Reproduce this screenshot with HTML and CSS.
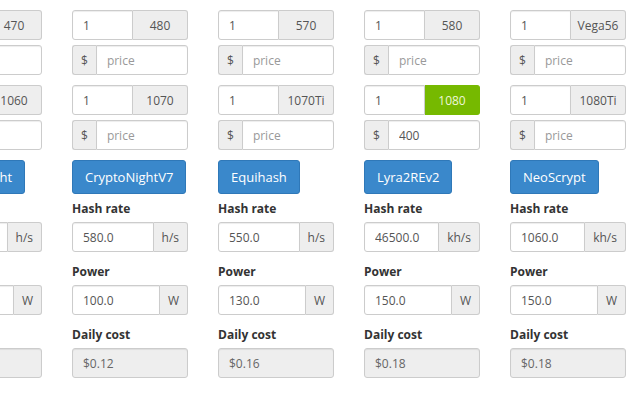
FILE: index.html
```html
<!DOCTYPE html>
<html>
<head>
<meta charset="utf-8">
<link rel="stylesheet" href="styles.css">
</head>
<body>
<div class="row">
  <div class="col">
    <div class="group"><input class="ctl" value="1"><span class="addon gpu">470</span></div>
    <div class="group pair"><span class="addon">$</span><input class="ctl" placeholder="price"></div>
    <div class="group"><input class="ctl" value="1"><span class="addon gpu">1060</span></div>
    <div class="group pair"><span class="addon">$</span><input class="ctl" placeholder="price"></div>
    <button class="btn">CryptoNight</button>
    <label class="lbl">Hash rate</label>
    <div class="group"><input class="ctl" value="750.0"><span class="addon">h/s</span></div>
    <label class="lbl">Power</label>
    <div class="group"><input class="ctl" value="120.0"><span class="addon">W</span></div>
    <label class="lbl">Daily cost</label>
    <input class="ctl full" value="$0.14" disabled>
  </div>
  <div class="col">
    <div class="group"><input class="ctl" value="1"><span class="addon gpu">480</span></div>
    <div class="group pair"><span class="addon">$</span><input class="ctl" placeholder="price"></div>
    <div class="group"><input class="ctl" value="1"><span class="addon gpu">1070</span></div>
    <div class="group pair"><span class="addon">$</span><input class="ctl" placeholder="price"></div>
    <button class="btn">CryptoNightV7</button>
    <label class="lbl">Hash rate</label>
    <div class="group"><input class="ctl" value="580.0"><span class="addon">h/s</span></div>
    <label class="lbl">Power</label>
    <div class="group"><input class="ctl" value="100.0"><span class="addon">W</span></div>
    <label class="lbl">Daily cost</label>
    <input class="ctl full" value="$0.12" disabled>
  </div>
  <div class="col">
    <div class="group"><input class="ctl" value="1"><span class="addon gpu">570</span></div>
    <div class="group pair"><span class="addon">$</span><input class="ctl" placeholder="price"></div>
    <div class="group"><input class="ctl" value="1"><span class="addon gpu">1070Ti</span></div>
    <div class="group pair"><span class="addon">$</span><input class="ctl" placeholder="price"></div>
    <button class="btn">Equihash</button>
    <label class="lbl">Hash rate</label>
    <div class="group"><input class="ctl" value="550.0"><span class="addon">h/s</span></div>
    <label class="lbl">Power</label>
    <div class="group"><input class="ctl" value="130.0"><span class="addon">W</span></div>
    <label class="lbl">Daily cost</label>
    <input class="ctl full" value="$0.16" disabled>
  </div>
  <div class="col">
    <div class="group"><input class="ctl" value="1"><span class="addon gpu">580</span></div>
    <div class="group pair"><span class="addon">$</span><input class="ctl" placeholder="price"></div>
    <div class="group"><input class="ctl" value="1"><span class="addon gpu active">1080</span></div>
    <div class="group pair"><span class="addon">$</span><input class="ctl" value="400"></div>
    <button class="btn">Lyra2REv2</button>
    <label class="lbl">Hash rate</label>
    <div class="group"><input class="ctl" value="46500.0"><span class="addon">kh/s</span></div>
    <label class="lbl">Power</label>
    <div class="group"><input class="ctl" value="150.0"><span class="addon">W</span></div>
    <label class="lbl">Daily cost</label>
    <input class="ctl full" value="$0.18" disabled>
  </div>
  <div class="col">
    <div class="group"><input class="ctl" value="1"><span class="addon gpu">Vega56</span></div>
    <div class="group pair"><span class="addon">$</span><input class="ctl" placeholder="price"></div>
    <div class="group"><input class="ctl" value="1"><span class="addon gpu">1080Ti</span></div>
    <div class="group pair"><span class="addon">$</span><input class="ctl" placeholder="price"></div>
    <button class="btn">NeoScrypt</button>
    <label class="lbl">Hash rate</label>
    <div class="group"><input class="ctl" value="1060.0"><span class="addon">kh/s</span></div>
    <label class="lbl">Power</label>
    <div class="group"><input class="ctl" value="150.0"><span class="addon">W</span></div>
    <label class="lbl">Daily cost</label>
    <input class="ctl full" value="$0.18" disabled>
  </div>
</div>
</body>
</html>
```
FILE: styles.css
```css
html, body {
  margin: 0;
  padding: 0;
  background: #fff;
  overflow: hidden;
}
body {
  font-family: "Open Sans", "Noto Sans", sans-serif;
  color: #333;
  font-size: 12px;
}
.row {
  display: flex;
  gap: 30px;
  margin-left: -74px;
  padding-top: 10px;
}
.col {
  width: 116px;
  flex: 0 0 116px;
  display: flex;
  flex-direction: column;
  align-items: flex-start;
}
.group {
  display: flex;
  width: 116px;
  height: 30px;
  box-sizing: border-box;
  margin-bottom: 5px;
}
.group.pair {
  margin-bottom: 10px;
}
.ctl {
  flex: 1 1 auto;
  min-width: 0;
  width: 100%;
  height: 30px;
  box-sizing: border-box;
  border: 1px solid #ccc;
  border-radius: 3px;
  padding: 0 10px;
  font-family: inherit;
  font-size: 12px;
  color: #555;
  background: #fff;
  box-shadow: inset 0 1px 1px rgba(0,0,0,0.075);
  outline: none;
}
.ctl::placeholder {
  color: #999;
}
.group .ctl:first-child {
  border-top-right-radius: 0;
  border-bottom-right-radius: 0;
}
.group .ctl:last-child {
  border-top-left-radius: 0;
  border-bottom-left-radius: 0;
}
.addon {
  flex: 0 0 auto;
  display: flex;
  align-items: center;
  justify-content: center;
  height: 30px;
  box-sizing: border-box;
  padding: 0 8px;
  background: #eee;
  border: 1px solid #ccc;
  color: #555;
  font-size: 12px;
}
.addon:last-child {
  border-left: 0;
  border-radius: 0 3px 3px 0;
}
.addon:first-child {
  border-right: 0;
  border-radius: 3px 0 0 3px;
}
.addon.gpu {
  width: 55px;
  padding: 0;
}
.addon.active {
  background: #76b900;
  border-color: #76b900;
  color: #eef6d8;
}
.btn {
  height: 34px;
  box-sizing: border-box;
  padding: 0 12px;
  background: #3a88cb;
  border: 1px solid #2f78b8;
  border-radius: 3px;
  color: #fff;
  font-family: inherit;
  font-size: 13px;
  margin-bottom: 5px;
}
.lbl {
  display: block;
  font-weight: bold;
  font-size: 12px;
  line-height: 20px;
  margin-bottom: 3px;
  color: #333;
}
.group + .lbl {
  margin-top: 5px;
}
.full {
  flex: none;
  width: 116px;
  background: #eee;
  color: #666;
}
```
